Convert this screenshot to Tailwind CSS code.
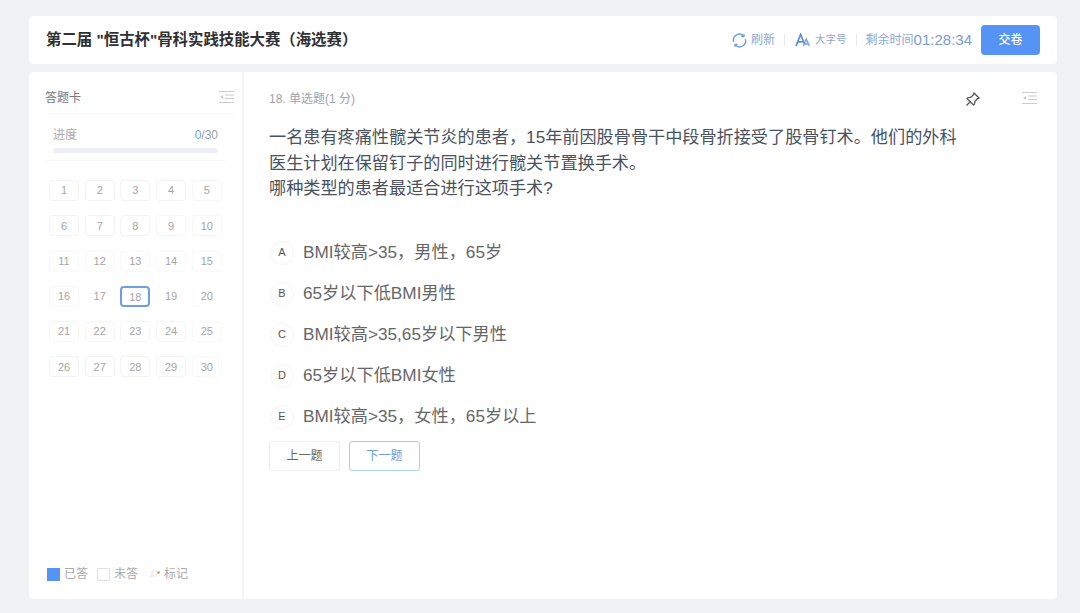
<!DOCTYPE html>
<html lang="zh">
<head>
<meta charset="utf-8">
<script src="https://cdn.jsdelivr.net/npm/@tailwindcss/browser@4"></script>
</head>
<body class="m-0 h-[613px] w-[1080px] overflow-hidden bg-[#f1f2f4] font-['Liberation_Sans','Noto_Sans_CJK_SC',sans-serif]">
<div class="flex h-full w-full flex-col gap-2 pl-[29px] pr-[23px] pt-4 pb-[14px]">
  <header class="flex h-12 shrink-0 items-center justify-between rounded-sm bg-white pl-[17px] pr-[17px]">
    <h1 class="text-[15.400px] font-bold text-[#303133]">第二届 "恒古杯"骨科实践技能大赛（海选赛）</h1>
    <div class="flex items-center">
      <svg class="h-[15px] w-[15px] text-[#6f9be0]" viewBox="0 0 16 16" fill="none" stroke="currentColor" stroke-width="1.5"><path d="M1.800 9.500A6.300 6.300 0 0 1 12.500 3.400"/><path d="M14.200 6.500A6.300 6.300 0 0 1 3.500 12.600"/><path d="M12.800 1v2.800H10M3.200 15v-2.800H6" stroke-width="1.300"/></svg>
      <span class="ml-[4px] text-[12px] text-[#8fa8d0]">刷新</span>
      <span class="mx-[9px] h-3 w-px bg-[#e6e8ec]"></span>
      <svg class="ml-[1px] h-[14px] w-[15px] text-[#5f8fdc]" viewBox="0 0 16 15" fill="none" stroke="currentColor"><path stroke-width="1.800" d="M1 14L6 1.500 10 11.500M3 9.500h5"/><path stroke-width="1.500" opacity=".85" d="M8.800 14L12 6.500 15.300 14M10 11.800h4"/></svg>
      <span class="ml-[5px] text-[10.500px] text-[#8fa8d0]">大字号</span>
      <span class="mx-[9px] h-3 w-px bg-[#e6e8ec]"></span>
      <span class="text-[12px] text-[#8fa8d0]">剩余时间</span>
      <span class="text-[15px] text-[#7c9bd0]">01:28:34</span>
      <button class="ml-[9px] h-[30px] w-[59px] rounded-sm bg-[#5593f4] text-[12px] font-medium text-white">交卷</button>
    </div>
  </header>
  <main class="flex min-h-0 flex-1 rounded-sm bg-white">
    <aside class="flex w-[215px] shrink-0 flex-col border-r-2 border-[#f3f4f6] pl-[16px] pr-[8px] pb-[16px]">
      <div class="flex h-[42px] items-center justify-between border-b border-[#f6f7f8] pt-[13px] pb-[4px]">
        <span class="mt-[2px] text-[12px] text-[#777]">答题卡</span>
        <svg class="h-[14px] w-[15px] text-[#c9ccd1]" viewBox="0 0 15 14" fill="none" stroke="currentColor"><path d="M0 1.500h15M6 5h9M6 8.500h9M0 12.500h15"/><path d="M4 5L1 7l3 2z" fill="currentColor" stroke="none"/></svg>
      </div>
      <div class="mr-[8px] border-b border-[#f7f8f9] px-[8px] pt-3 pb-[7px]">
        <div class="flex items-center justify-between text-[12px]">
          <span class="text-[#aaa]">进度</span>
          <span class="text-[#9a9fa8]"><span class="text-[#7c9fd8]">0</span>/30</span>
        </div>
        <div class="mt-[4px] h-[5px] rounded-full bg-[#eef0f6]"></div>
      </div>
      <div class="mt-[19px] grid grid-cols-[repeat(5,30px)] gap-x-[5.700px] gap-y-[14.300px] pl-[4px]">
        <div class="flex h-[21px] items-center justify-center rounded-sm border border-[#f3f3f4] text-[11px] text-[#a5a5a5]">1</div>
        <div class="flex h-[21px] items-center justify-center rounded-sm border border-[#f3f3f4] text-[11px] text-[#a5a5a5]">2</div>
        <div class="flex h-[21px] items-center justify-center rounded-sm border border-[#f3f3f4] text-[11px] text-[#a5a5a5]">3</div>
        <div class="flex h-[21px] items-center justify-center rounded-sm border border-[#f3f3f4] text-[11px] text-[#a5a5a5]">4</div>
        <div class="flex h-[21px] items-center justify-center rounded-sm border border-[#f7f7f8] text-[11px] text-[#a5a5a5]">5</div>
        <div class="flex h-[21px] items-center justify-center rounded-sm border border-[#f3f3f4] text-[11px] text-[#a5a5a5]">6</div>
        <div class="flex h-[21px] items-center justify-center rounded-sm border border-[#f3f3f4] text-[11px] text-[#a5a5a5]">7</div>
        <div class="flex h-[21px] items-center justify-center rounded-sm border border-[#f3f3f4] text-[11px] text-[#a5a5a5]">8</div>
        <div class="flex h-[21px] items-center justify-center rounded-sm border border-[#f7f7f8] text-[11px] text-[#a5a5a5]">9</div>
        <div class="flex h-[21px] items-center justify-center rounded-sm border border-[#f7f7f8] text-[11px] text-[#a5a5a5]">10</div>
        <div class="flex h-[21px] items-center justify-center rounded-sm border border-[#f8f8f9] text-[11px] text-[#a5a5a5]">11</div>
        <div class="flex h-[21px] items-center justify-center rounded-sm border border-[#f8f8f9] text-[11px] text-[#a5a5a5]">12</div>
        <div class="flex h-[21px] items-center justify-center rounded-sm border border-[#f8f8f9] text-[11px] text-[#a5a5a5]">13</div>
        <div class="flex h-[21px] items-center justify-center rounded-sm border border-[#fafafa] text-[11px] text-[#a5a5a5]">14</div>
        <div class="flex h-[21px] items-center justify-center rounded-sm border border-[#fafafa] text-[11px] text-[#a5a5a5]">15</div>
        <div class="flex h-[21px] items-center justify-center rounded-sm border border-[#f8f8f9] text-[11px] text-[#a5a5a5]">16</div>
        <div class="flex h-[21px] items-center justify-center rounded-sm border border-[#fcfcfc] text-[11px] text-[#a5a5a5]">17</div>
        <div class="flex h-[21px] items-center justify-center rounded-sm border-2 border-[#6d9fdc] pt-px text-[11px] text-[#a5a5a5]">18</div>
        <div class="flex h-[21px] items-center justify-center rounded-sm border border-[#fcfcfc] text-[11px] text-[#a5a5a5]">19</div>
        <div class="flex h-[21px] items-center justify-center rounded-sm border border-[#fcfcfc] text-[11px] text-[#a5a5a5]">20</div>
        <div class="flex h-[21px] items-center justify-center rounded-sm border border-[#f6f6f7] text-[11px] text-[#a5a5a5]">21</div>
        <div class="flex h-[21px] items-center justify-center rounded-sm border border-[#f6f6f7] text-[11px] text-[#a5a5a5]">22</div>
        <div class="flex h-[21px] items-center justify-center rounded-sm border border-[#f6f6f7] text-[11px] text-[#a5a5a5]">23</div>
        <div class="flex h-[21px] items-center justify-center rounded-sm border border-[#f6f6f7] text-[11px] text-[#a5a5a5]">24</div>
        <div class="flex h-[21px] items-center justify-center rounded-sm border border-[#f8f8f9] text-[11px] text-[#a5a5a5]">25</div>
        <div class="flex h-[21px] items-center justify-center rounded-sm border border-[#f3f3f4] text-[11px] text-[#a5a5a5]">26</div>
        <div class="flex h-[21px] items-center justify-center rounded-sm border border-[#f3f3f4] text-[11px] text-[#a5a5a5]">27</div>
        <div class="flex h-[21px] items-center justify-center rounded-sm border border-[#f3f3f4] text-[11px] text-[#a5a5a5]">28</div>
        <div class="flex h-[21px] items-center justify-center rounded-sm border border-[#f3f3f4] text-[11px] text-[#a5a5a5]">29</div>
        <div class="flex h-[21px] items-center justify-center rounded-sm border border-[#f8f8f9] text-[11px] text-[#a5a5a5]">30</div>
      </div>
      <div class="mt-auto flex items-center pl-[2px] text-[12px] text-[#aaa]">
        <span class="h-[13px] w-[13px] bg-[#5593f4]"></span><span class="ml-[4px]">已答</span>
        <span class="ml-[9px] h-[13px] w-[13px] rounded-[1px] border border-[#dfe1e4]"></span><span class="ml-[4px]">未答</span>
        <svg class="ml-[11px] h-3 w-3" viewBox="0 0 12 12" fill="none"><path d="M5 1l5 4-2.500 1-2 3-1-2L1 10l2.500-4L2 4.500 4 4z" stroke="#e8e8ea"/><circle cx="9.500" cy="4.500" r="1.300" fill="#ee8a55"/></svg>
        <span class="ml-[3px]">标记</span>
      </div>
    </aside>
    <section class="flex min-w-0 flex-1 flex-col pl-[25px] pr-[20px]">
      <div class="flex h-[36px] items-center justify-between pt-[18px]">
        <span class="text-[12px] text-[#a0a3a8]">18. 单选题(1 分)</span>
        <div class="flex items-center gap-[42px]">
          <svg class="h-[15px] w-[15px] text-[#555]" viewBox="0 0 15 15" fill="none" stroke="currentColor" stroke-width="1.300"><path d="M9 1l5 5-1.800.8-2.400 2.700-.3 2.700-1 .8L5 9.500 2.100 6.600l.8-1 2.700-.3 2.700-2.400zM5 10l-3.500 3.500"/></svg>
          <svg class="-mt-[2px] h-[14px] w-[15px] text-[#c9ccd1]" viewBox="0 0 15 14" fill="none" stroke="currentColor"><path d="M0 1.500h15M6 5h9M6 8.500h9M0 12.500h15"/><path d="M4 5L1 7l3 2z" fill="currentColor" stroke="none"/></svg>
        </div>
      </div>
      <div class="mt-[17px] w-[695px] text-[17.150px] leading-[25.500px] text-[#4a5260]">
        <p>一名患有疼痛性髋关节炎的患者，15年前因股骨骨干中段骨折接受了股骨钉术。他们的外科医生计划在保留钉子的同时进行髋关节置换手术。</p>
        <p>哪种类型的患者最适合进行这项手术?</p>
      </div>
      <ul class="mt-[39px] flex flex-col gap-[17px] text-[17.200px] text-[#666]">
        <li class="flex h-6 items-center"><span class="ml-[1px] flex h-6 w-6 items-center justify-center rounded-full border border-[#f6f6f7] text-[11px] text-[#555]">A</span><span class="ml-[9px]">BMI较高&gt;35，男性，65岁</span></li>
        <li class="flex h-6 items-center"><span class="ml-[1px] flex h-6 w-6 items-center justify-center rounded-full border border-[#f6f6f7] text-[11px] text-[#555]">B</span><span class="ml-[9px]">65岁以下低BMI男性</span></li>
        <li class="flex h-6 items-center"><span class="ml-[1px] flex h-6 w-6 items-center justify-center rounded-full border border-[#f6f6f7] text-[11px] text-[#555]">C</span><span class="ml-[9px]">BMI较高&gt;35,65岁以下男性</span></li>
        <li class="flex h-6 items-center"><span class="ml-[1px] flex h-6 w-6 items-center justify-center rounded-full border border-[#f6f6f7] text-[11px] text-[#555]">D</span><span class="ml-[9px]">65岁以下低BMI女性</span></li>
        <li class="flex h-6 items-center"><span class="ml-[1px] flex h-6 w-6 items-center justify-center rounded-full border border-[#f6f6f7] text-[11px] text-[#555]">E</span><span class="ml-[9px]">BMI较高&gt;35，女性，65岁以上</span></li>
      </ul>
      <div class="mt-[12px] flex gap-[9px]">
        <button class="h-[30px] w-[71px] rounded-[3px] border border-[#eceef0] text-[12px] text-[#666]">上一题</button>
        <button class="h-[30px] w-[71px] rounded-[3px] border border-[#a9d0ea] text-[12px] text-[#6f9be0]">下一题</button>
      </div>
    </section>
  </main>
</div>
</body>
</html>
